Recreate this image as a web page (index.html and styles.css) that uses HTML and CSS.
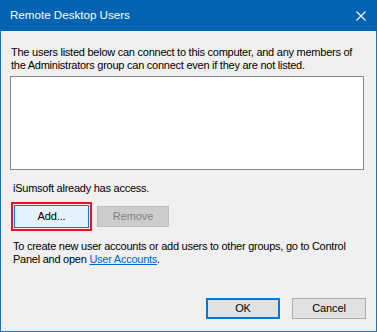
FILE: index.html
```html
<!DOCTYPE html>
<html>
<head>
<meta charset="utf-8">
<link rel="stylesheet" href="styles.css">
</head>
<body>
<div class="window">
  <div class="titlebar">
    <span class="title">Remote Desktop Users</span>
    <svg class="close" width="10" height="10" viewBox="0 0 10 10"><path d="M0.5 0.5 L9.5 9.5 M9.5 0.5 L0.5 9.5" stroke="#fff" stroke-width="1.1" fill="none"/></svg>
  </div>
  <div class="content">
    <p class="intro">The users listed below can connect to this computer, and any members of the Administrators group can connect even if they are not listed.</p>
    <div class="listbox"></div>
    <p class="access">iSumsoft already has access.</p>
    <div class="btn-row">
      <div class="highlight"><button class="btn btn-add">Add...</button></div>
      <button class="btn btn-disabled">Remove</button>
    </div>
    <p class="note">To create new user accounts or add users to other groups, go to Control Panel and open <a class="link" href="#">User Accounts</a>.</p>
    <div class="footer">
      <button class="btn btn-ok">OK</button>
      <button class="btn btn-cancel">Cancel</button>
    </div>
  </div>
</div>
</body>
</html>
```

FILE: styles.css
```css
html, body {
  margin: 0;
  padding: 0;
  background: #f0f0f0;
}
.window {
  width: 377px;
  height: 332px;
  box-sizing: border-box;
  border: 1px solid #1c73c4;
  border-top: none;
  background: #f0f0f0;
  display: flex;
  flex-direction: column;
  font-family: "Liberation Sans", Arial, sans-serif;
  font-size: 11px;
  line-height: 13px;
  letter-spacing: -0.25px;
  color: #000;
}
.titlebar {
  height: 30px;
  flex: none;
  background: #0063b1;
  margin: 0 -1px;
  display: flex;
  align-items: center;
  justify-content: space-between;
  padding: 0 11px 1px 10px;
  color: #fff;
}
.title {
  font-size: 11.6px;
  line-height: 14px;
  letter-spacing: 0;
}
.close {
  display: block;
  margin-top: 1px;
}
.content {
  flex: 1;
  display: flex;
  flex-direction: column;
  padding: 15px 12px 12px 9px;
}
p {
  margin: 0;
}
.intro {
  padding-left: 1px;
}
.listbox {
  margin-top: 4px;
  height: 94px;
  box-sizing: border-box;
  border: 1px solid #828790;
  background: #fff;
}
.access {
  margin-top: 12px;
  padding-left: 3px;
}
.btn-row {
  margin-top: 7px;
  display: flex;
  align-items: center;
  padding-left: 1px;
}
.highlight {
  border: 2px solid #e81123;
  padding: 1px;
  display: flex;
}
.btn {
  font-family: "Liberation Sans", Arial, sans-serif;
  font-size: 11px;
  line-height: 13px;
  letter-spacing: -0.1px;
  margin: 0;
  padding: 0;
  box-sizing: border-box;
  color: #000;
  display: flex;
  align-items: center;
  justify-content: center;
}
.btn-add {
  width: 75px;
  height: 23px;
  background: #e5f1fb;
  border: 1px solid #0078d7;
}
.btn-disabled {
  margin-left: 5px;
  width: 72px;
  height: 21px;
  background: #cccccc;
  border: 1px solid #bfbfbf;
  color: #838383;
}
.note {
  margin-top: 9px;
  padding-left: 3px;
}
.link {
  color: #0066cc;
  text-decoration: underline;
}
.footer {
  margin-top: auto;
  margin-right: -2px;
  display: flex;
  justify-content: flex-end;
  gap: 12px;
}
.btn-ok,
.btn-cancel {
  width: 74px;
  height: 21px;
  background: #e1e1e1;
}
.btn-ok {
  border: 2px solid #0078d7;
}
.btn-cancel {
  border: 1px solid #adadad;
}
```
